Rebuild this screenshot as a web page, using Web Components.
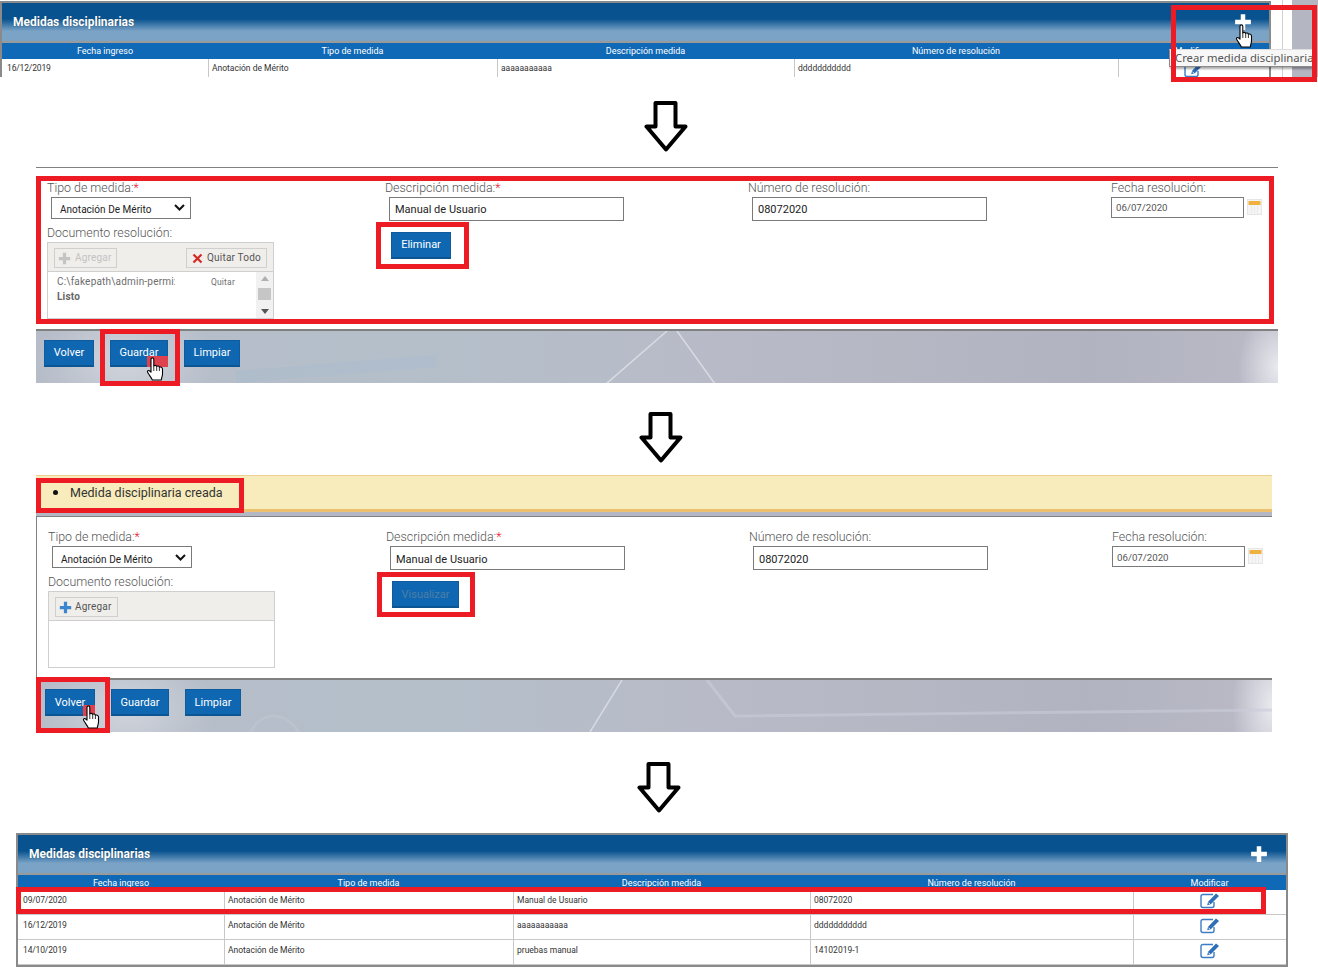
<!DOCTYPE html>
<html lang="es">
<head>
<meta charset="utf-8">
<title>Medidas disciplinarias</title>
<style>
  html, body { margin: 0; padding: 0; background: #fff; }
  body { width: 1318px; height: 980px; overflow: hidden; font-family: Roboto, "Liberation Sans", sans-serif; }
</style>
</head>
<body>
<flow-page></flow-page>
<script>
const icons = {
  plus: (c, s) => `<svg width="${s}" height="${s}" viewBox="0 0 16 16"><path d="M6 1h4v5h5v4h-5v5H6v-5H1V6h5z" fill="${c}"/></svg>`,
  cross: `<svg width="11" height="11" viewBox="0 0 11 11"><path d="M1.5 1.5l8 8M9.5 1.5l-8 8" stroke="#d42a26" stroke-width="2.2"/></svg>`,
  chevron: `<svg width="11" height="7" viewBox="0 0 11 7"><path d="M1 1l4.5 4.5L10 1" fill="none" stroke="#111" stroke-width="2"/></svg>`,
  edit: `<svg width="20" height="16" viewBox="0 0 20 16"><path d="M13 1.5H3Q1 1.5 1 3.5v9q0 2 2 2h9q2 0 2-2V9" fill="none" stroke="#3d7cc4" stroke-width="1.4"/><path d="M16 .5l3 2.6-8.2 8.2-3.6 1 .9-3.6z" fill="#2f6fb8"/><path d="M8.4 9.6l1.8 1.8" stroke="#fff" stroke-width=".9"/></svg>`
};

class ArrowDown extends HTMLElement {
  constructor() {
    super();
    this.attachShadow({ mode: "open" });
    this.shadowRoot.innerHTML = `
      <style>:host{display:block;width:44px;height:51px} svg{display:block}</style>
      <svg width="44" height="51" viewBox="0 0 44 51"><path d="M11.5 2H31.5V25.5H41.5L22 48.5 2.5 25.5H11.5z" fill="#fff" stroke="#000" stroke-width="4" stroke-linejoin="round"/></svg>`;
  }
}
customElements.define("arrow-down", ArrowDown);

// recuadro rojo que va encima de la captura
class RedBox extends HTMLElement {
  constructor() {
    super();
    this.attachShadow({ mode: "open" });
    this.shadowRoot.innerHTML = `
      <style>:host{position:absolute;box-sizing:border-box;border:5px solid #ed1c24;pointer-events:none;z-index:5}</style>`;
  }
}
customElements.define("red-box", RedBox);

class HandCursor extends HTMLElement {
  constructor() {
    super();
    this.attachShadow({ mode: "open" });
    this.shadowRoot.innerHTML = `
      <style>:host{position:absolute;width:18px;height:24px;z-index:7} svg{display:block}</style>
      <svg width="18" height="24" viewBox="0 0 18 24"><path d="M5 2.2C5 .4 7.8.4 7.8 2.2V9C8.5 8 10.3 8.1 10.7 9.4 11.5 8.6 13.1 9 13.4 10.3 14.3 9.7 16.5 10 16.5 12V17C16.5 19 15.6 20.300 15.3 23H6.300C5.800 21 3.600 18.800 1.700 15.500 .8 13.900 2.500 12.800 3.800 14L5 15.200z" fill="#fff" stroke="#000" stroke-width="1.1" stroke-linejoin="round"/><path d="M7.800 9v5M10.700 9.400V14M13.400 10.300V14" stroke="#000" stroke-width=".8"/></svg>`;
  }
}
customElements.define("hand-cursor", HandCursor);

class BlueButton extends HTMLElement {
  constructor() {
    super();
    this.attachShadow({ mode: "open" });
    this.shadowRoot.innerHTML = `
      <style>
        :host{display:inline-flex;box-sizing:border-box;height:27px;align-items:center;justify-content:center;position:relative;
          background:#0f67b1;border:1px solid #0e5c9e;border-bottom:2px solid #0b5592;color:#fff;font-size:11px;line-height:1}
        :host([dim]){color:#4d7ea8}
        :host([up]){padding-bottom:2px}
        .hit{position:absolute;right:-1px;bottom:-2px;height:11px;background:#e0414f;display:none}
        :host([hit]) .hit{display:block;width:var(--hit-w,21px)}
        span{position:relative;z-index:1}
      </style>
      <div class="hit"></div><span><slot></slot></span>`;
  }
}
customElements.define("blue-button", BlueButton);

class ActionBar extends HTMLElement {
  constructor() {
    super();
    this.attachShadow({ mode: "open" });
  }
  connectedCallback() {
    const isB = this.getAttribute("variant") === "b";
    const lines = isB
      ? `<path d="M586 0L554 52" stroke="#dfe1e8" stroke-width="1.500" fill="none" opacity=".8"/>
         <path d="M671 0L699 36 1236 30" stroke="#c9ccd8" stroke-width="3" fill="none" opacity=".6"/>
         <path d="M214 54C224 30 250 30 264 54" stroke="#c3c8d2" stroke-width="3" fill="none" opacity=".5"/>`
      : `<path d="M631 0L570 53" stroke="#dfe1e8" stroke-width="1.500" fill="none" opacity=".85"/>
         <path d="M641 0L679 53" stroke="#dfe1e8" stroke-width="1.500" fill="none" opacity=".85"/>
         <path d="M200 46L400 30" stroke="#a7bccf" stroke-width="12" fill="none" opacity=".4"/>`;
    this.shadowRoot.innerHTML = `
      <style>
        :host{display:block;position:relative;box-sizing:border-box;height:54px;border-top:2px solid #808080;overflow:visible;
          background:
            radial-gradient(ellipse 40px ${isB ? "80px at 100% 50%" : "60px at 100% 70%"}, #e9e9ef 0, #e9e9ef00 100%),
            radial-gradient(ellipse 90px 60px at 90px 30px, #d0d4dc 0, #d0d4dc00 100%),
            linear-gradient(90deg,#b6bcc8 0,#b4bfca 30%,#b8bbc7 55%,#b2b3c0 85%,#b9bac6 100%)}
        svg{position:absolute;left:0;top:0}
        .btns{position:relative;display:flex;gap:16px;padding:9px 0 0 8px}
      </style>
      <svg width="100%" height="52">${lines}</svg>
      <div class="btns"><slot></slot></div>`;
  }
}
customElements.define("action-bar", ActionBar);

class FormField extends HTMLElement {
  constructor() {
    super();
    this.attachShadow({ mode: "open" });
    this.shadowRoot.innerHTML = `
      <style>
        :host{display:block;color:#555;font-size:12.4px;font-weight:300;line-height:16px}
        .top{padding-top:1px}
        .req{color:#e8132b;display:none}
        :host([required]) .req{display:inline}
        ::slotted(*){margin-top:1px;font-weight:400}
      </style>
      <div class="top"><span class="lbl"></span><span class="req">*</span></div>
      <slot></slot>`;
  }
  connectedCallback() {
    this.shadowRoot.querySelector(".lbl").textContent = this.getAttribute("label");
  }
}
customElements.define("form-field", FormField);

// campo de texto / combo, dibujado como caja con texto
class FieldBox extends HTMLElement {
  constructor() {
    super();
    this.attachShadow({ mode: "open" });
  }
  connectedCallback() {
    const isSelect = this.hasAttribute("select");
    this.shadowRoot.innerHTML = `
      <style>
        :host{display:flex;box-sizing:border-box;align-items:center;justify-content:space-between;margin-left:4px;
          width:235px;height:24px;padding:1px 5px 0;background:#fff;border:1px solid #7a7a7a;color:#222;font-size:11px}
        :host([select]){width:140px;height:22px;padding:3px 5px 0 8px;font-size:10px;letter-spacing:.03px}
        :host([date]){margin-left:0;width:133px;height:21px;padding:0 4px;color:#555;font-size:9.7px}
        svg{display:block;margin-top:-4px}
      </style>
      <slot></slot>${isSelect ? icons.chevron : ""}`;
  }
}
customElements.define("field-box", FieldBox);

class CalendarIcon extends HTMLElement {
  constructor() {
    super();
    this.attachShadow({ mode: "open" });
    this.shadowRoot.innerHTML = `
      <style>:host{display:block} svg{display:block}</style>
      <svg width="15" height="16" viewBox="0 0 15 16"><rect x=".5" y=".5" width="14" height="15" fill="#f5f5f5" stroke="#e6e6e6"/><rect x="1.500" y="2" width="12" height="4" fill="#efb23e"/><path d="M4.500 6v9M7.500 6v9M10.500 6v9" stroke="#ececec"/></svg>`;
  }
}
customElements.define("calendar-icon", CalendarIcon);

class UploadBox extends HTMLElement {
  constructor() {
    super();
    this.attachShadow({ mode: "open" });
  }
  connectedCallback() {
    const withFile = this.hasAttribute("file");
    const toolbar = withFile
      ? `<span class="tb off">${icons.plus("#c4c4c4", 13)}Agregar</span>
         <span class="tb end">${icons.cross}Quitar Todo</span>`
      : `<span class="tb">${icons.plus("#3a87cf", 13)}Agregar</span>`;
    const body = withFile
      ? `<div class="file">
           <div class="row"><span class="path">C:\\fakepath\\admin-permi:</span><span class="quit">Quitar</span></div>
           <b>Listo</b>
         </div>
         <div class="scroll"><i class="up"></i><i class="thumb"></i><i class="down"></i></div>`
      : "";
    this.shadowRoot.innerHTML = `
      <style>
        :host{display:block;box-sizing:border-box;width:227px;height:77px;border:1px solid #cfcfcf;background:#fff;color:#666;font-size:10px;letter-spacing:.2px}
        .bar{display:flex;justify-content:space-between;box-sizing:border-box;height:29px;padding:5px 6px;background:#f0eeea;border-bottom:1px solid #cfcfcf}
        .tb{display:flex;align-items:center;gap:3px;box-sizing:border-box;width:63px;height:20px;padding:0 0 0 3px;border:1px solid #cfcfcf;color:#555;white-space:nowrap}
        .tb.off{color:#c2c2c2;gap:4px}
        .tb.end{width:81px;padding-left:5px;gap:4px}
        .main{display:flex;height:46px}
        .file{flex:1;padding:3px 0 0 9px;line-height:14px;color:#6d6d6d;position:relative}
        .row{display:flex;justify-content:space-between;padding-right:21px}
        .path{width:118px;overflow:hidden;white-space:nowrap}
        .quit{font-size:8.5px}
        b{color:#666;font-weight:700;display:block;margin-top:1px}
        .scroll{width:17px;background:#f1f1f1;display:flex;flex-direction:column;align-items:center;justify-content:space-between;padding:4px 0}
        .up,.down{width:0;height:0;border:4px solid transparent;border-top:0;border-bottom:5px solid #b0b0b0}
        .down{border-bottom:0;border-top:5px solid #555}
        .thumb{width:13px;height:12px;background:#c6c6c6;margin-top:-2px}
      </style>
      <div class="bar">${toolbar}</div>
      <div class="main">${body}</div>`;
  }
}
customElements.define("upload-box", UploadBox);

class MeasureForm extends HTMLElement {
  constructor() {
    super();
    this.attachShadow({ mode: "open" });
  }
  connectedCallback() {
    const saved = this.hasAttribute("saved");
    const action = saved ? "Visualizar" : "Eliminar";
    this.shadowRoot.innerHTML = `
      <style>
        :host{display:block;box-sizing:border-box;position:relative;height:161px;background:#fff;padding:11px 0 0 11px}
        :host([saved]){height:162px;border-left:1px solid #808080;border-top:1px solid #808080;padding:11px 0 0 11px}
        :host([saved]) field-box{padding-top:3px}
        :host([saved]) field-box[select]{padding-top:5px}
        :host([saved]) field-box[date]{padding-top:2px}
        .grid{display:grid;grid-template-columns:338px 363px 363px 1fr}
        .doc{margin-top:5px}
        blue-button{width:${saved ? 67 : 60}px;margin:11px 0 0 6px}
        .date{display:flex;gap:3px;align-items:flex-start}
        .date calendar-icon{margin-top:2px}
      </style>
      <div class="grid">
        <div>
          <form-field label="Tipo de medida:" required><field-box select>Anotación De Mérito</field-box></form-field>
          <form-field class="doc" label="Documento resolución:"><upload-box ${saved ? "" : "file"}></upload-box></form-field>
        </div>
        <div>
          <form-field label="Descripción medida:" required><field-box>Manual de Usuario</field-box></form-field>
          <blue-button ${saved ? "dim" : "up"}>${action}</blue-button>
        </div>
        <div><form-field label="Número de resolución:"><field-box>08072020</field-box></form-field></div>
        <div><form-field label="Fecha resolución:"><div class="date"><field-box date>06/07/2020</field-box><calendar-icon></calendar-icon></div></form-field></div>
      </div>`;
  }
}
customElements.define("measure-form", MeasureForm);

class MeasuresPanel extends HTMLElement {
  constructor() {
    super();
    this.attachShadow({ mode: "open" });
  }
  connectedCallback() {
    const cols = this.getAttribute("cols");
    const rows = JSON.parse(this.getAttribute("rows"));
    const titles = ["Fecha ingreso", "Tipo de medida", "Descripción medida", "Número de resolución", "Modificar"];
    const rowH = this.getAttribute("row-h") || "25px";
    this.shadowRoot.innerHTML = `
      <style>
        :host{display:block;box-sizing:border-box;background:#fff;border:2px solid #8a8a8a;font-size:9px;color:#333}
        :host([open]){border-bottom:0}
        .head{display:flex;align-items:center;justify-content:space-between;box-sizing:border-box;height:40px;padding:0 18px 1px 11px;
          color:#fff;font-size:12px;font-weight:700;letter-spacing:0;text-shadow:0 0 1px #0006;border-bottom:2px solid #9a9a9a;
          background:linear-gradient(#08528f 0,#08528f 42%,#7aa3c6 74%,#7aa3c6 100%)}
        :host([open]) .head{padding-right:17px}
        .head svg{display:block}
        .row{display:grid;grid-template-columns:${cols}}
        .th{background:#0f69b6;color:#fff;height:16px;line-height:16px;text-align:center}
        :host(:not([open])) .th{height:15px;line-height:17px}
        .td{box-sizing:border-box;height:${rowH};padding:4px 0 0 3px;border-left:1px solid #c8c8c8;border-bottom:1px solid #c8c8c8;font-size:8.5px;line-height:12px}
        :host([open]) .td{padding-top:3px;border-bottom:0}
        .td:first-child{border-left:0;padding-left:5px;letter-spacing:-.15px}
        .td.c{padding:3px 0 0;display:flex;justify-content:center}
        svg{display:block}
      </style>
      <div class="head"><span>Medidas disciplinarias</span>${icons.plus("#fff", 18)}</div>
      <div class="row">${titles.map(t => `<div class="th">${t}</div>`).join("")}</div>
      ${rows.map(r => `<div class="row">${r.map(c => `<div class="td">${c}</div>`).join("")}<div class="td c">${icons.edit}</div></div>`).join("")}`;
  }
}
customElements.define("measures-panel", MeasuresPanel);

class ToolTip extends HTMLElement {
  constructor() {
    super();
    this.attachShadow({ mode: "open" });
    this.shadowRoot.innerHTML = `
      <style>
        :host{position:absolute;box-sizing:border-box;height:18px;padding:0 1px 0 5px;background:#f7f7f7;border:1px solid #8a8a8a;border-right:0;border-top-color:#ddd;
          box-shadow:1px 2px 2px #0005;color:#555;font-size:11.3px;line-height:15px;white-space:nowrap;z-index:3;font-family:"Noto Sans","Liberation Sans",sans-serif}
      </style><slot></slot>`;
  }
}
customElements.define("tool-tip", ToolTip);

class MessageBar extends HTMLElement {
  constructor() {
    super();
    this.attachShadow({ mode: "open" });
    this.shadowRoot.innerHTML = `
      <style>
        :host{display:flex;align-items:center;box-sizing:border-box;height:37px;padding:0 0 1px 17px;background:#f8ecbc;border-top:1px solid #eccf92;border-bottom:3px solid #edc070;color:#333;font-size:12.5px}
        i{width:5px;height:5px;border-radius:50%;background:#111;margin-right:12px}
      </style><i></i><slot></slot>`;
  }
}
customElements.define("message-bar", MessageBar);

class FlowPage extends HTMLElement {
  constructor() {
    super();
    this.attachShadow({ mode: "open" });
  }
  connectedCallback() {
    const oneRow = JSON.stringify([["16/12/2019", "Anotación de Mérito", "aaaaaaaaaaa", "ddddddddddd"]]).replace(/"/g, "&quot;");
    const threeRows = JSON.stringify([
      ["09/07/2020", "Anotación de Mérito", "Manual de Usuario", "08072020"],
      ["16/12/2019", "Anotación de Mérito", "aaaaaaaaaaa", "ddddddddddd"],
      ["14/10/2019", "Anotación de Mérito", "pruebas manual", "14102019-1"]
    ]).replace(/"/g, "&quot;");
    this.shadowRoot.innerHTML = `
      <style>
        :host{display:block;position:relative;width:1318px;height:980px}
        .top{position:relative;height:82px}
        .top measures-panel{width:1271px;margin:0;position:relative;top:1px}
        .side{position:absolute;left:1282px;top:0;width:36px;height:77px;box-sizing:border-box;border-left:1px solid #d0d0d0;background:linear-gradient(90deg,#fff 0 9px,#b4b6c2 9px)}
        arrow-down{position:relative}
        .a1{margin:19px 0 0 644px}
        .a2{margin:29px 0 0 639px}
        .a3{margin:30px 0 0 637px}
        .shot{position:relative;margin-left:36px;width:1242px}
        .s1{margin-top:15px;border-top:1px solid #808080}
        .s2{margin-top:12px;width:1236px}
        .gap{height:4px;background:#b4b8c4}
        .final{position:relative;margin:20px 0 0 16px;width:1272px}
      </style>
      <div class="top">
        <measures-panel open cols="206px 289px 297px 324px 1fr" row-h="18px" rows="${oneRow}"></measures-panel>
        <div class="side"></div>
        <tool-tip style="left:1169px;top:49px">Crear medida disciplinaria</tool-tip>
        <red-box style="left:1171px;top:5px;width:146px;height:77px"></red-box>
        <hand-cursor style="left:1235px;top:24px"></hand-cursor>
      </div>
      <arrow-down class="a1"></arrow-down>
      <section class="shot s1">
        <measure-form></measure-form>
        <action-bar>
          <blue-button up style="width:50px">Volver</blue-button>
          <blue-button up hit style="width:58px">Guardar</blue-button>
          <blue-button up style="width:56px">Limpiar</blue-button>
        </action-bar>
        <red-box style="left:0;top:8px;width:1238px;height:148px"></red-box>
        <red-box style="left:340px;top:54px;width:93px;height:47px"></red-box>
        <red-box style="left:64px;top:161px;width:80px;height:57px"></red-box>
        <hand-cursor style="left:110px;top:189px"></hand-cursor>
      </section>
      <arrow-down class="a2"></arrow-down>
      <section class="shot s2">
        <message-bar>Medida disciplinaria creada</message-bar>
        <div class="gap"></div>
        <measure-form saved></measure-form>
        <action-bar variant="b">
          <blue-button hit style="width:50px;--hit-w:12px;margin-left:1px">Volver</blue-button>
          <blue-button style="width:58px">Guardar</blue-button>
          <blue-button style="width:56px">Limpiar</blue-button>
        </action-bar>
        <red-box style="left:0;top:3px;width:208px;height:35px"></red-box>
        <red-box style="left:341px;top:97px;width:98px;height:45px"></red-box>
        <red-box style="left:0;top:202px;width:74px;height:56px"></red-box>
        <hand-cursor style="left:46px;top:230px"></hand-cursor>
      </section>
      <arrow-down class="a3"></arrow-down>
      <section class="final">
        <measures-panel cols="206px 289px 297px 323px 1fr" rows="${threeRows}"></measures-panel>
        <red-box style="left:0;top:54px;width:1250px;height:27px"></red-box>
      </section>`;
  }
}
customElements.define("flow-page", FlowPage);
</script>
</body>
</html>
